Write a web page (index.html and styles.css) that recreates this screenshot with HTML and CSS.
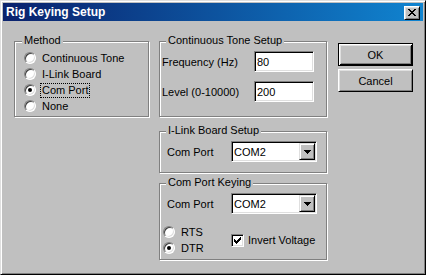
FILE: index.html
```html
<!DOCTYPE html>
<html lang="en">
<head>
  <meta charset="UTF-8" />
  <title>Rig Keying Setup</title>
  <link rel="stylesheet" href="styles.css">
</head>
<body>
  <div class="window">
    <div class="titlebar">
      <span class="title">Rig Keying Setup</span>
      <button class="close-btn" aria-label="Close">
        <svg width="8" height="7" viewBox="0 0 8 7"><path d="M0 0h2v1H0zM6 0h2v1H6zM1 1h2v1H1zM5 1h2v1H5zM2 2h4v1H2zM3 3h2v1H3zM2 4h4v1H2zM1 5h2v1H1zM5 5h2v1H5zM0 6h2v1H0zM6 6h2v1H6z" fill="#000"/></svg>
      </button>
    </div>

    <div class="content">
      <!-- Method -->
      <div class="group method">
        <span class="group-title">Method</span>
        <label class="radio"><span class="radio-mark"></span><span class="radio-text">Continuous Tone</span></label>
        <label class="radio"><span class="radio-mark"></span><span class="radio-text">I-Link Board</span></label>
        <label class="radio checked"><span class="radio-mark"></span><span class="radio-text focus">Com Port</span></label>
        <label class="radio"><span class="radio-mark"></span><span class="radio-text">None</span></label>
      </div>

      <div class="middle">
        <!-- Continuous Tone Setup -->
        <div class="group tone">
          <span class="group-title">Continuous Tone Setup</span>
          <div class="field-row">
            <span class="field-label">Frequency (Hz)</span>
            <input class="edit" type="text" value="80">
          </div>
          <div class="field-row">
            <span class="field-label">Level (0-10000)</span>
            <input class="edit" type="text" value="200">
          </div>
        </div>

        <!-- I-Link Board Setup -->
        <div class="group ilink">
          <span class="group-title">I-Link Board Setup</span>
          <div class="field-row">
            <span class="field-label port">Com Port</span>
            <div class="combo">
              <span class="combo-value">COM2</span>
              <span class="combo-arrow"><svg width="7" height="4" viewBox="0 0 7 4"><path d="M0 0h7v1H0zM1 1h5v1H1zM2 2h3v1H2zM3 3h1v1H3z" fill="#000"/></svg></span>
            </div>
          </div>
        </div>

        <!-- Com Port Keying -->
        <div class="group keying">
          <span class="group-title">Com Port Keying</span>
          <div class="field-row">
            <span class="field-label port">Com Port</span>
            <div class="combo">
              <span class="combo-value">COM2</span>
              <span class="combo-arrow"><svg width="7" height="4" viewBox="0 0 7 4"><path d="M0 0h7v1H0zM1 1h5v1H1zM2 2h3v1H2zM3 3h1v1H3z" fill="#000"/></svg></span>
            </div>
          </div>
          <div class="line-row">
            <div class="line-radios">
              <label class="radio"><span class="radio-mark"></span><span class="radio-text">RTS</span></label>
              <label class="radio checked"><span class="radio-mark"></span><span class="radio-text">DTR</span></label>
            </div>
            <label class="check">
              <span class="check-box"><svg width="7" height="7" viewBox="0 0 7 7"><path d="M6 0h1v3H6zM5 1h1v3H5zM4 2h1v3H4zM3 3h1v3H3zM2 4h1v3H2zM1 3h1v3H1zM0 2h1v3H0z" fill="#000"/></svg></span>
              <span>Invert Voltage</span>
            </label>
          </div>
        </div>
      </div>

      <div class="buttons">
        <button class="btn default">OK</button>
        <button class="btn">Cancel</button>
      </div>
    </div>
  </div>
</body>
</html>
```

FILE: styles.css
```css
/* Reset & base */
* { box-sizing: border-box; margin: 0; padding: 0; }
body {
  background: #c0c0c0;
  font-family: "Liberation Sans", Arial, sans-serif;
  font-size: 11px;
  color: #000;
}

/* Window frame */
.window {
  width: 426px;
  height: 275px;
  background: #c0c0c0;
  border: 1px solid;
  border-color: #dfdfdf #000 #000 #dfdfdf;
  box-shadow: inset 1px 1px #fff, inset -1px -1px #808080;
  padding: 2px;
}

/* Title bar */
.titlebar {
  height: 18px;
  display: flex;
  align-items: center;
  justify-content: space-between;
  padding: 0 3px 0 3px;
  background: linear-gradient(to right, #0a216c, #1084d0);
}
.title {
  color: #fff;
  font-weight: bold;
  font-size: 12px;
}
.close-btn {
  width: 16px;
  height: 14px;
  display: flex;
  align-items: center;
  justify-content: center;
  background: #c0c0c0;
  border: 1px solid;
  border-color: #fff #000 #000 #fff;
  box-shadow: inset 1px 1px #dfdfdf, inset -1px -1px #808080;
  margin-top: 1px;
}

/* Dialog body */
.content {
  display: flex;
  align-items: flex-start;
  padding: 20px 0 0 11px;
}

/* Etched group boxes */
.group {
  position: relative;
  border: 1px solid #808080;
  box-shadow: inset 1px 1px #fff, 1px 1px #fff;
}
.group-title {
  position: absolute;
  top: -8px;
  left: 6px;
  padding: 0 2px;
  line-height: 12px;
  background: #c0c0c0;
  white-space: nowrap;
}

.method {
  width: 135px;
  height: 76px;
  padding: 8px 0 0 9px;
}
.method .group-title { left: 7px; }

.middle {
  width: 168px;
  margin-left: 10px;
  display: flex;
  flex-direction: column;
}
.tone {
  height: 76px;
  padding: 9px 0 0 2px;
  display: flex;
  flex-direction: column;
  gap: 9px;
}
.ilink {
  height: 42px;
  margin-top: 14px;
  padding: 9px 0 0 7px;
}
.keying {
  height: 77px;
  margin-top: 10px;
  padding: 9px 0 0 7px;
}

/* Radio buttons */
.radio {
  display: flex;
  align-items: center;
  height: 16px;
  gap: 4px;
}
.radio-mark {
  position: relative;
  width: 12px;
  height: 12px;
  flex: none;
  border-radius: 50%;
  background: #fff;
  border: 1px solid;
  border-color: #808080 #fff #fff #808080;
  box-shadow: inset 1px 1px #404040, inset -1px -1px #dfdfdf;
}
.radio.checked .radio-mark::after {
  content: "";
  position: absolute;
  left: 3px;
  top: 3px;
  width: 4px;
  height: 4px;
  border-radius: 50%;
  background: #000;
}
.radio-text {
  line-height: 13px;
  padding: 0 1px;
  border: 1px dotted transparent;
}
.radio-text.focus { border-color: #000; }

/* Labels + fields */
.field-row {
  display: flex;
  align-items: center;
}
.field-label {
  width: 92px;
  flex: none;
}
.field-label.port { width: 64px; }

.edit {
  width: 60px;
  height: 21px;
  padding: 1px 2px;
  font: inherit;
  color: #000;
  background: #fff;
  border: 1px solid;
  border-color: #808080 #fff #fff #808080;
  box-shadow: inset 1px 1px #000, inset -1px -1px #dfdfdf;
  outline: none;
}

/* Drop-down combo */
.combo {
  width: 86px;
  height: 21px;
  display: flex;
  align-items: stretch;
  padding: 1px;
  background: #fff;
  border: 1px solid;
  border-color: #808080 #fff #fff #808080;
  box-shadow: inset 1px 1px #000, inset -1px -1px #dfdfdf;
}
.combo-value {
  flex: 1;
  display: flex;
  align-items: center;
  padding-left: 1px;
}
.combo-arrow {
  width: 16px;
  display: flex;
  align-items: center;
  justify-content: center;
  background: #c0c0c0;
  border: 1px solid;
  border-color: #dfdfdf #000 #000 #dfdfdf;
  box-shadow: inset 1px 1px #fff, inset -1px -1px #808080;
}

/* RTS/DTR + invert */
.line-row {
  display: flex;
  align-items: center;
  margin-top: 10px;
  margin-left: -4px;
}
.line-radios { width: 68px; }
.check {
  display: flex;
  align-items: center;
  gap: 4px;
}
.check-box {
  width: 13px;
  height: 13px;
  display: flex;
  align-items: center;
  justify-content: center;
  background: #fff;
  border: 1px solid;
  border-color: #808080 #fff #fff #808080;
  box-shadow: inset 1px 1px #000, inset -1px -1px #dfdfdf;
}

/* Push buttons */
.buttons {
  display: flex;
  flex-direction: column;
  gap: 3px;
  margin: 2px 0 0 11px;
}
.btn {
  width: 75px;
  height: 23px;
  font: inherit;
  color: #000;
  background: #c0c0c0;
  border: 1px solid;
  border-color: #fff #000 #000 #fff;
  box-shadow: inset 1px 1px #dfdfdf, inset -1px -1px #808080;
}
.btn.default {
  border-color: #000;
  box-shadow: inset 1px 1px #fff, inset -1px -1px #000, inset 2px 2px #dfdfdf, inset -2px -2px #808080;
}
```
